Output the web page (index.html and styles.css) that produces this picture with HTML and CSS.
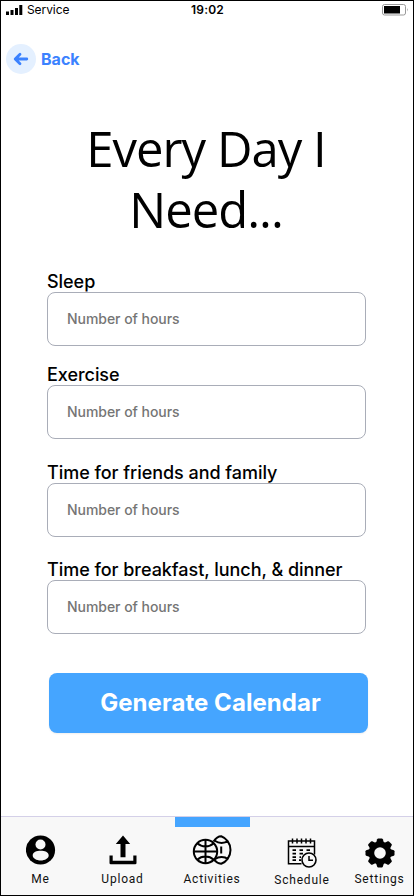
FILE: index.html
```html
<!DOCTYPE html>
<html lang="en">
<head>
<meta charset="utf-8">
<meta name="viewport" content="width=device-width">
<title>Every Day I Need</title>
<link rel="stylesheet" href="styles.css">
</head>
<body>
<div class="phone">
  <header class="status">
    <div class="service">
      <svg width="17" height="11" viewBox="0 0 17 11"><path d="M0 6.500h3V10H0zM4.500 5h3v5h-3zM9 3h3v7H9zM13.300 0h3V10h-3z"/></svg>
      <span>Service</span>
    </div>
    <span class="time">19:02</span>
    <svg class="battery" width="27" height="12" viewBox="0 0 27 12"><rect x=".5" y=".5" width="23" height="10.500" rx="2" fill="#fff" stroke="#999"/><path d="M2 2h16v7.500H2z"/><path d="M25 4q1.500 1.800 0 3.600z" fill="#999"/></svg>
  </header>
  <a class="back"><svg width="30" height="30" viewBox="0 0 30 30"><circle cx="15" cy="15" r="15" fill="#e4f0ff"/><path d="M20.800 15H9.500M14 10.200 9.200 15l4.800 4.800" fill="none" stroke="#3b82ff" stroke-width="2.800" stroke-linecap="round" stroke-linejoin="round"/></svg><span>Back</span></a>
  <h1>Every Day I<br>Need...</h1>
  <form class="form">
    <label class="field"><span>Sleep</span><input placeholder="Number of hours"></label>
    <label class="field second"><span>Exercise</span><input placeholder="Number of hours"></label>
    <label class="field third"><span>Time for friends and family</span><input placeholder="Number of hours"></label>
    <label class="field fourth"><span>Time for breakfast, lunch, &amp; dinner</span><input placeholder="Number of hours"></label>
    <button type="button">Generate Calendar</button>
  </form>
  <nav class="nav">
    <a class="item me">
      <svg width="30" height="30" viewBox="0 0 30 30"><circle cx="14.500" cy="15" r="14.600"/><circle cx="14.500" cy="9.500" r="5" fill="#f8f8f8"/><path d="M6.700 20.500c0-3.500 4-4.800 8-4.800s8 1.300 8 4.800c0 2.800-3.800 5-8 5s-8-2.200-8-5z" fill="#f8f8f8"/></svg>
      <span>Me</span>
    </a>
    <a class="item upload">
      <svg width="30" height="30" viewBox="0 0 30 30"><path d="M15 .5 22.200 9h-4.700v13.200h-5V9H7.800z"/><path d="M1.500 20.500h3.200v5.200h20.600v-5.200h3.200v7.400q0 1.300-1.300 1.300H2.800q-1.300 0-1.300-1.300z"/></svg>
      <span>Upload</span>
    </a>
    <a class="item activities">
      <svg width="40" height="30" viewBox="0 0 40 30" fill="none" stroke="#000" stroke-width="2"><path d="M21.500 6.500C23.500 3.500 26.500 1.200 29.200 1.200c4.800 1.800 9.300 6.800 9.300 13.800s-4.500 12-9.300 13.800c-2.500-.4-5.700-2.200-7.500-4.500M22.800 5.800c4 3 9.600 3 13.400 0M22.800 24.200c4-3 9.600-3 13.400 0M29.200 11.500v7"/><circle cx="13.500" cy="16.500" r="11.700"/><path d="M13.500 4.800v23.400M1.800 16.500h23.400M5.300 8.300c4.500 4.200 11.900 4.200 16.400 0M5.300 24.700c4.500-4.200 11.900-4.200 16.400 0"/></svg>
      <span>Activities</span>
    </a>
    <a class="item schedule">
      <svg width="30" height="30" viewBox="0 0 30 30" fill="none" stroke="#000"><path d="M14.500 25.800H1.500V3h26v13.500M1.500 8.500h26" stroke-width="1.500"/><path d="M5.500.5v5M10 .5v5M14.500.5v5M19 .5v5M23.500.5v5" stroke-width="1.500"/><path d="M5.500 12.200H9M12.500 12.200H16M19.500 12.200H23M5.500 15.700H9M12.500 15.700H16M5.500 19.200H9M12.500 19.200H14M5.500 22.200H9M12 22.200h2" stroke-width="1.800"/><circle cx="22" cy="22" r="7" fill="#f8f8f8" stroke-width="1.600"/><path d="M22 18v4.200h4" stroke-width="1.500"/></svg>
      <span>Schedule</span>
    </a>
    <a class="item settings">
      <svg width="30" height="30" viewBox="-15 -15 30 30"><circle r="8.600" fill="none" stroke="#000" stroke-width="5.600"/><g id="teeth"><path d="M-4-10-2.800-13.800q.3-.7 1-.7H1.800q.7 0 1 .7L4-10z"/><path transform="rotate(45)" d="M-4-10-2.800-13.800q.3-.7 1-.7H1.800q.7 0 1 .7L4-10z"/><path transform="rotate(90)" d="M-4-10-2.800-13.800q.3-.7 1-.7H1.800q.7 0 1 .7L4-10z"/><path transform="rotate(135)" d="M-4-10-2.800-13.800q.3-.7 1-.7H1.800q.7 0 1 .7L4-10z"/></g><use href="#teeth" transform="rotate(180)"/></svg>
      <span>Settings</span>
    </a>
  </nav>
</div>
</body>
</html>
```
FILE: styles.css
```css
* { box-sizing: border-box; }
body { margin: 0; background: #fff; color: #000; font-family: Inter, sans-serif; }
svg { display: block; flex: none; }
.phone { width: 414px; height: 896px; border: 1px solid #000; display: flex; flex-direction: column; overflow: hidden; }
.status { height: 18px; display: grid; grid-template-columns: 1fr auto 1fr; align-items: center; padding: 0 4px 0 5px; font-size: 12px; line-height: 16px; }
.service { display: flex; gap: 4px; align-items: center; letter-spacing: -.08px; }
.time { font-weight: 600; letter-spacing: .2px; }
.battery { justify-self: end; }
.back { display: flex; align-items: center; gap: 5px; height: 30px; margin: 25px 0 0 5px; color: #3b82ff; font-size: 16px; font-weight: 700; }
h1 { margin: 44px 0 0; padding-right: 2px; text-align: center; font: 400 49px/61px "Open Sans", sans-serif; letter-spacing: -1px; }
.form { margin: 32px 0 0 46px; width: 319px; }
.field { display: flex; flex-direction: column; font-size: 18px; line-height: 20px; font-weight: 500; letter-spacing: -.04px; height: 74px; }
.field span { height: 20px; }
.second { margin-top: 19px; }
.third { margin-top: 24px; }
.fourth { margin-top: 23px; }
input { height: 54px; width: 319px; border: 1px solid #a9adb8; border-radius: 8px; padding: 0 19px 2px; background: #fff; font: 500 14px Inter, sans-serif; letter-spacing: -.04px; }
input::placeholder { color: #757575; }
button { display: block; width: 319px; height: 60px; margin: 39px 0 0 2px; padding: 0 0 2px 4px; border: 0; border-radius: 8px; background: #45a5ff; color: #fff; font: 700 24px Inter, sans-serif; letter-spacing: .05px; box-shadow: 0 1px 2px #0001; }
.nav { height: 79px; margin-top: auto; border-top: 1px solid #d4d0e8; background: #f8f8f8; display: grid; grid-template-columns: 79px 85px 94px 85px 69px; }
.item { display: flex; flex-direction: column; align-items: center; padding-top: 18px; font: 400 12px/16px Roboto, sans-serif; letter-spacing: .8px; white-space: nowrap; color: #111; }
.item span { margin-top: 6px; }
.activities { padding-top: 0; }
.activities::before { content: ""; width: 75px; height: 10px; margin-bottom: 8px; background: #45a5ff; }
.schedule { padding: 21px 0 0 1px; }
.schedule span { margin-top: 4px; }
.settings { padding: 21px 0 0 2px; }
.settings span { margin-top: 3px; }
```
